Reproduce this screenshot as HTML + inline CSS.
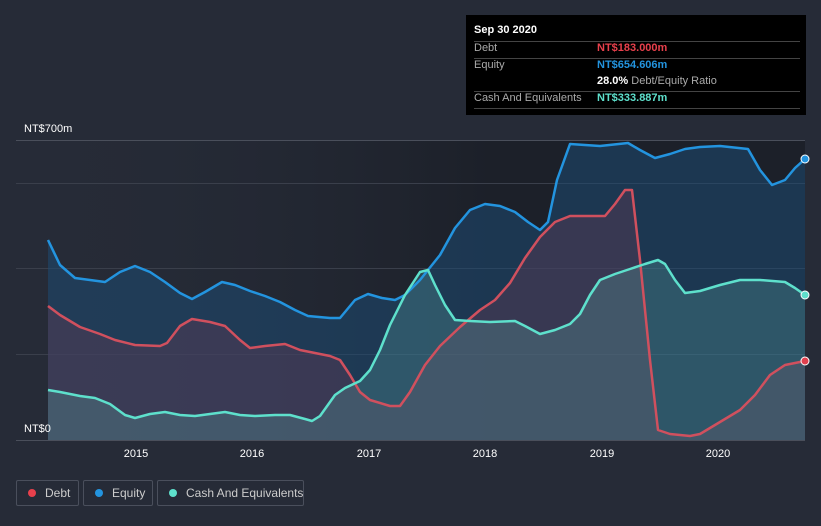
<!DOCTYPE html>
<html><head><meta charset="utf-8"><style>
html,body{margin:0;width:821px;height:526px;overflow:hidden}
body{background:#262b37;font-family:"Liberation Sans",sans-serif;position:relative}
.tt{position:absolute;left:466px;top:15px;width:340px;height:100px;background:#000;color:#fff;font-size:11px}
.tt .r{position:absolute;left:8px;right:6px;border-top:1px solid #444}
.lab{color:#aaa}
.leg{position:absolute;top:480px;height:26px;border:1px solid #4a4f5c;border-radius:2px;color:#ccc;font-size:12px;line-height:25px;box-sizing:border-box;white-space:nowrap}
.leg i{display:inline-block;width:8px;height:8px;border-radius:50%;margin:0 9px 0 11px;vertical-align:0}
</style></head><body>
<svg width="821" height="526" style="position:absolute;left:0;top:0">
<defs><linearGradient id="bg" x1="0" x2="1"><stop offset="0" stop-color="#262b37" stop-opacity="0"/><stop offset="0.6" stop-color="#1c2029"/><stop offset="1" stop-color="#1c2029"/></linearGradient></defs>
<rect x="16" y="140" width="789" height="300" fill="url(#bg)"/>
<g stroke="#3a3f4b" stroke-width="1"><line x1="16" y1="140.5" x2="805" y2="140.5" stroke="#4a4f5b"/><line x1="16" y1="183.5" x2="805" y2="183.5"/><line x1="16" y1="268.5" x2="805" y2="268.5"/><line x1="16" y1="354.5" x2="805" y2="354.5"/><line x1="16" y1="440.5" x2="805" y2="440.5" stroke="#4a4f5b"/></g>
<polygon fill="#1e4a72" fill-opacity="0.55" points="48,440 48,240 60,265 75,278 105,282 120,272 135,266 150,272 165,282 180,293 192,299 205,292 222,282 235,285 250,291 265,296 280,302 295,310 308,316 330,318 340,318 355,300 368,294 382,298 395,300 405,295 420,280 440,255 455,228 470,210 485,204 500,206 515,212 528,222 540,230 548,222 557,180 570,144 600,146 628,143 640,150 655,158 670,154 685,149 700,147 720,146 748,149 760,170 772,185 785,180 795,168 805,159 805,440"/>
<polygon fill="#5a3a55" fill-opacity="0.45" points="48,440 48,306 60,315 80,327 100,334 115,340 135,345 160,346 167,343 180,326 192,319 210,322 225,326 240,340 250,348 265,346 285,344 300,350 315,353 330,356 340,360 350,375 360,392 370,400 390,406 400,406 410,392 425,365 440,346 460,327 480,310 495,300 510,283 525,258 540,237 555,222 570,216 590,216 605,216 615,204 625,190 632,190 640,260 650,360 658,430 670,434 690,436 700,434 720,422 740,410 755,395 770,375 785,365 805,361 805,440"/>
<polygon fill="#5aa0a0" fill-opacity="0.3" points="48,440 48,390 60,392 80,396 95,398 110,404 125,415 135,418 150,414 165,412 180,415 195,416 210,414 225,412 240,415 255,416 275,415 290,415 305,419 312,421 320,416 335,395 345,388 360,381 370,370 380,350 390,325 405,295 420,272 428,270 435,285 445,305 455,320 470,321 490,322 515,321 525,326 540,334 555,330 570,324 580,314 590,295 600,280 615,274 630,269 645,264 658,260 665,264 675,280 685,293 700,291 720,285 740,280 760,280 785,282 795,288 805,295 805,440"/>
<g fill="none" stroke-width="2.5" stroke-linejoin="round">
<polyline stroke="#2394df" points="48,240 60,265 75,278 105,282 120,272 135,266 150,272 165,282 180,293 192,299 205,292 222,282 235,285 250,291 265,296 280,302 295,310 308,316 330,318 340,318 355,300 368,294 382,298 395,300 405,295 420,280 440,255 455,228 470,210 485,204 500,206 515,212 528,222 540,230 548,222 557,180 570,144 600,146 628,143 640,150 655,158 670,154 685,149 700,147 720,146 748,149 760,170 772,185 785,180 795,168 805,159"/>
<polyline stroke="#d0505e" points="48,306 60,315 80,327 100,334 115,340 135,345 160,346 167,343 180,326 192,319 210,322 225,326 240,340 250,348 265,346 285,344 300,350 315,353 330,356 340,360 350,375 360,392 370,400 390,406 400,406 410,392 425,365 440,346 460,327 480,310 495,300 510,283 525,258 540,237 555,222 570,216 590,216 605,216 615,204 625,190 632,190 640,260 650,360 658,430 670,434 690,436 700,434 720,422 740,410 755,395 770,375 785,365 805,361"/>
<polyline stroke="#5ee0cc" points="48,390 60,392 80,396 95,398 110,404 125,415 135,418 150,414 165,412 180,415 195,416 210,414 225,412 240,415 255,416 275,415 290,415 305,419 312,421 320,416 335,395 345,388 360,381 370,370 380,350 390,325 405,295 420,272 428,270 435,285 445,305 455,320 470,321 490,322 515,321 525,326 540,334 555,330 570,324 580,314 590,295 600,280 615,274 630,269 645,264 658,260 665,264 675,280 685,293 700,291 720,285 740,280 760,280 785,282 795,288 805,295"/>
</g>
<circle cx="805" cy="159" r="4" fill="#2394df" stroke="#fff" stroke-width="1"/>
<circle cx="805" cy="361" r="4" fill="#e0404e" stroke="#fff" stroke-width="1"/>
<circle cx="805" cy="295" r="4" fill="#5ee0cc" stroke="#fff" stroke-width="1"/>
<g fill="#fff" font-size="11" font-family="Liberation Sans,sans-serif">
<text x="24" y="132">NT$700m</text><text x="24" y="432">NT$0</text>
<g text-anchor="middle"><text x="136" y="457">2015</text><text x="252" y="457">2016</text><text x="369" y="457">2017</text><text x="485" y="457">2018</text><text x="602" y="457">2019</text><text x="718" y="457">2020</text></g></g>
</svg>
<div class="tt">
<div style="position:absolute;left:8px;top:9px;font-weight:bold">Sep 30 2020</div>
<div class="r" style="top:26px"></div>
<div class="lab" style="position:absolute;left:8px;top:27px">Debt</div><div style="position:absolute;left:131px;top:27px;color:#e8404c;font-weight:bold">NT$183.000m</div>
<div class="r" style="top:43px"></div>
<div class="lab" style="position:absolute;left:8px;top:44px">Equity</div><div style="position:absolute;left:131px;top:44px;color:#2394df;font-weight:bold">NT$654.606m</div>
<div style="position:absolute;left:131px;top:60px"><b>28.0%</b> <span class="lab">Debt/Equity Ratio</span></div>
<div class="r" style="top:76px"></div>
<div class="lab" style="position:absolute;left:8px;top:77px">Cash And Equivalents</div><div style="position:absolute;left:131px;top:77px;color:#5ee0cc;font-weight:bold">NT$333.887m</div>
<div class="r" style="top:93px"></div>
</div>
<div class="leg" style="left:16px;width:63px"><i style="background:#e8404c"></i>Debt</div>
<div class="leg" style="left:83px;width:70px"><i style="background:#2394df"></i>Equity</div>
<div class="leg" style="left:157px;width:147px"><i style="background:#5ee0cc"></i>Cash And Equivalents</div>
</body></html>
